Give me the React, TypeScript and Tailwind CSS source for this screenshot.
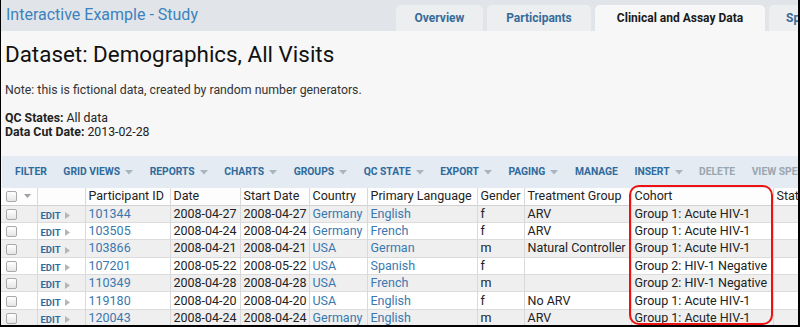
import React from "react";

const font = { fontFamily: "Roboto, 'Liberation Sans', sans-serif" };

function Caret() {
  return (
    <svg width="8" height="5" viewBox="0 0 8 5" className="ml-[5px] inline-block">
      <path d="M0 0 L8 0 L4 4.5 Z" fill="#a8b4bf" />
    </svg>
  );
}

function Checkbox() {
  return (
    <span className="inline-block align-middle w-[11px] h-[11px] rounded-[2px] border border-[#a9a9a9] bg-gradient-to-b from-white to-[#e6e6e6]" />
  );
}

const cols = [36, 48, 85, 70, 69, 58, 110, 47, 107, 142, 40];
const tableWidth = cols.reduce((a, b) => a + b, 0);

type Row = {
  id: string;
  date: string;
  start: string;
  country: string;
  lang: string;
  gender: string;
  tg: string;
  cohort: string;
};

const rows: Row[] = [
  { id: "101344", date: "2008-04-27", start: "2008-04-27", country: "Germany", lang: "English", gender: "f", tg: "ARV", cohort: "Group 1: Acute HIV-1" },
  { id: "103505", date: "2008-04-24", start: "2008-04-24", country: "Germany", lang: "French", gender: "f", tg: "ARV", cohort: "Group 1: Acute HIV-1" },
  { id: "103866", date: "2008-04-21", start: "2008-04-21", country: "USA", lang: "German", gender: "m", tg: "Natural Controller", cohort: "Group 1: Acute HIV-1" },
  { id: "107201", date: "2008-05-22", start: "2008-05-22", country: "USA", lang: "Spanish", gender: "f", tg: "", cohort: "Group 2: HIV-1 Negative" },
  { id: "110349", date: "2008-04-28", start: "2008-04-28", country: "USA", lang: "French", gender: "m", tg: "", cohort: "Group 2: HIV-1 Negative" },
  { id: "119180", date: "2008-04-20", start: "2008-04-20", country: "USA", lang: "English", gender: "f", tg: "No ARV", cohort: "Group 1: Acute HIV-1" },
  { id: "120043", date: "2008-04-24", start: "2008-04-24", country: "Germany", lang: "English", gender: "m", tg: "ARV", cohort: "Group 1: Acute HIV-1" },
];

const toolbar: { label: string; caret?: boolean; disabled?: boolean }[] = [
  { label: "FILTER" },
  { label: "GRID VIEWS", caret: true },
  { label: "REPORTS", caret: true },
  { label: "CHARTS", caret: true },
  { label: "GROUPS", caret: true },
  { label: "QC STATE", caret: true },
  { label: "EXPORT", caret: true },
  { label: "PAGING", caret: true },
  { label: "MANAGE" },
  { label: "INSERT", caret: true },
  { label: "DELETE", disabled: true },
  { label: "VIEW SPECIMENS", disabled: true },
];

export default function App() {
  const cell = "border-l border-[#d9d9d9] px-[3px] py-0 leading-[16px] whitespace-nowrap overflow-hidden";
  return (
    <div
      style={font}
      className="relative w-[800px] h-[327px] overflow-hidden bg-[#f7f7f7] border-l border-r-2 border-b-2 border-black"
    >
      {/* Top header */}
      <div className="flex items-end h-[31px] bg-[#e1e5e9]">
        <div className="self-center pl-[5px] text-[16px] text-[#3c82be] -mt-[2px] flex-1">
          Interactive Example - Study
        </div>
        <div className="flex gap-[4px] items-end">
          <div className="h-[26px] w-[87px] rounded-t-[5px] bg-[#eceef0] flex items-center justify-center text-[12px] font-bold text-[#366b99]">
            Overview
          </div>
          <div className="h-[26px] w-[104px] rounded-t-[5px] bg-[#eceef0] flex items-center justify-center text-[12px] font-bold text-[#366b99]">
            Participants
          </div>
          <div className="h-[26px] w-[170px] rounded-t-[5px] bg-[#f7f7f7] flex items-center justify-center text-[12px] font-bold text-[#1a1a1a]">
            Clinical and Assay Data
          </div>
          <div className="h-[26px] w-[29px] rounded-tl-[5px] bg-[#eceef0] flex items-center pl-[17px] text-[12px] font-bold text-[#366b99] overflow-hidden whitespace-nowrap">
            Specimens
          </div>
        </div>
      </div>

      {/* Body */}
      <div className="pl-[4px] pt-[8px]">
        <div className="text-[22.4px] leading-[30px] text-[#111]">Dataset: Demographics, All Visits</div>
        <div className="mt-[14px] text-[12.3px] leading-[14px] text-[#333]">
          Note: this is fictional data, created by random number generators.
        </div>
        <div className="mt-[14px] text-[12.3px] leading-[14px] text-[#222]">
          <div>
            <span className="font-bold">QC States:</span> All data
          </div>
          <div>
            <span className="font-bold">Data Cut Date:</span> 2013-02-28
          </div>
        </div>
      </div>

      {/* Toolbar */}
      <div className="mt-[17px] ml-[1px] h-[32px] bg-[#e4ebf2] flex items-center pl-[13px] gap-[16.5px] whitespace-nowrap">
        {toolbar.map((t) => (
          <div
            key={t.label}
            className={
              "flex items-center text-[10.3px] font-bold " +
              (t.disabled ? "text-[#9aa6b0]" : "text-[#2f6a9c]")
            }
          >
            {t.label}
            {t.caret && <Caret />}
          </div>
        ))}
      </div>

      {/* Table */}
      <table className="table-fixed border-collapse text-[12.5px]" style={{ width: tableWidth }}>
        <colgroup>
          {cols.map((w, i) => (
            <col key={i} style={{ width: w }} />
          ))}
        </colgroup>
        <thead>
          <tr className="h-[17px] bg-[#fdfdfd] text-[#222] border-b border-[#d0d0d0] text-left">
            <th className="font-normal px-[5px] py-0 leading-[16px] whitespace-nowrap">
              <div className="flex items-center gap-[7px]">
                <Checkbox />
                <svg width="7" height="4" viewBox="0 0 7 4">
                  <path d="M0 0 L7 0 L3.5 4 Z" fill="#a0a0a0" />
                </svg>
              </div>
            </th>
            <th className={cell + " font-normal"}></th>
            <th className={cell + " font-normal"}>Participant ID</th>
            <th className={cell + " font-normal"}>Date</th>
            <th className={cell + " font-normal"}>Start Date</th>
            <th className={cell + " font-normal"}>Country</th>
            <th className={cell + " font-normal"}>Primary Language</th>
            <th className={cell + " font-normal"}>Gender</th>
            <th className={cell + " font-normal"}>Treatment Group</th>
            <th className={cell + " font-normal"}>Cohort</th>
            <th className={cell + " font-normal"}>Status</th>
          </tr>
        </thead>
        <tbody>
          {rows.map((r, i) => (
            <tr
              key={r.id}
              className={"h-[17.4px] border-b border-[#dcdcdc] " + (i % 2 === 0 ? "bg-[#efefef]" : "bg-white")}
            >
              <td className="px-[5px] py-0 align-middle leading-[12px]">
                <Checkbox />
              </td>
              <td className={cell + " align-middle"}>
                <span className="inline-flex items-center pl-[0px] text-[9.5px] font-bold text-[#2f6a9c] leading-none translate-y-[1px]">
                  EDIT
                  <svg width="5" height="7" viewBox="0 0 5 7" className="ml-[4px]">
                    <path d="M0 0 L5 3.5 L0 7 Z" fill="#b5b5b5" />
                  </svg>
                </span>
              </td>
              <td className={cell + " text-[#3a78b0]"}>{r.id}</td>
              <td className={cell + " text-[#222]"}>{r.date}</td>
              <td className={cell + " text-[#222]"}>{r.start}</td>
              <td className={cell + " text-[#3a78b0]"}>{r.country}</td>
              <td className={cell + " text-[#3a78b0]"}>{r.lang}</td>
              <td className={cell + " text-[#222]"}>{r.gender}</td>
              <td className={cell + " text-[#222]"}>{r.tg}</td>
              <td className={cell + " text-[#222]"}>{r.cohort}</td>
              <td className={cell}></td>
            </tr>
          ))}
        </tbody>
      </table>

      {/* Highlight overlay */}
      <div className="absolute left-[628px] top-[185px] w-[144px] h-[140px] rounded-[10px] border-2 border-[#ee1111] pointer-events-none" />
    </div>
  );
}
